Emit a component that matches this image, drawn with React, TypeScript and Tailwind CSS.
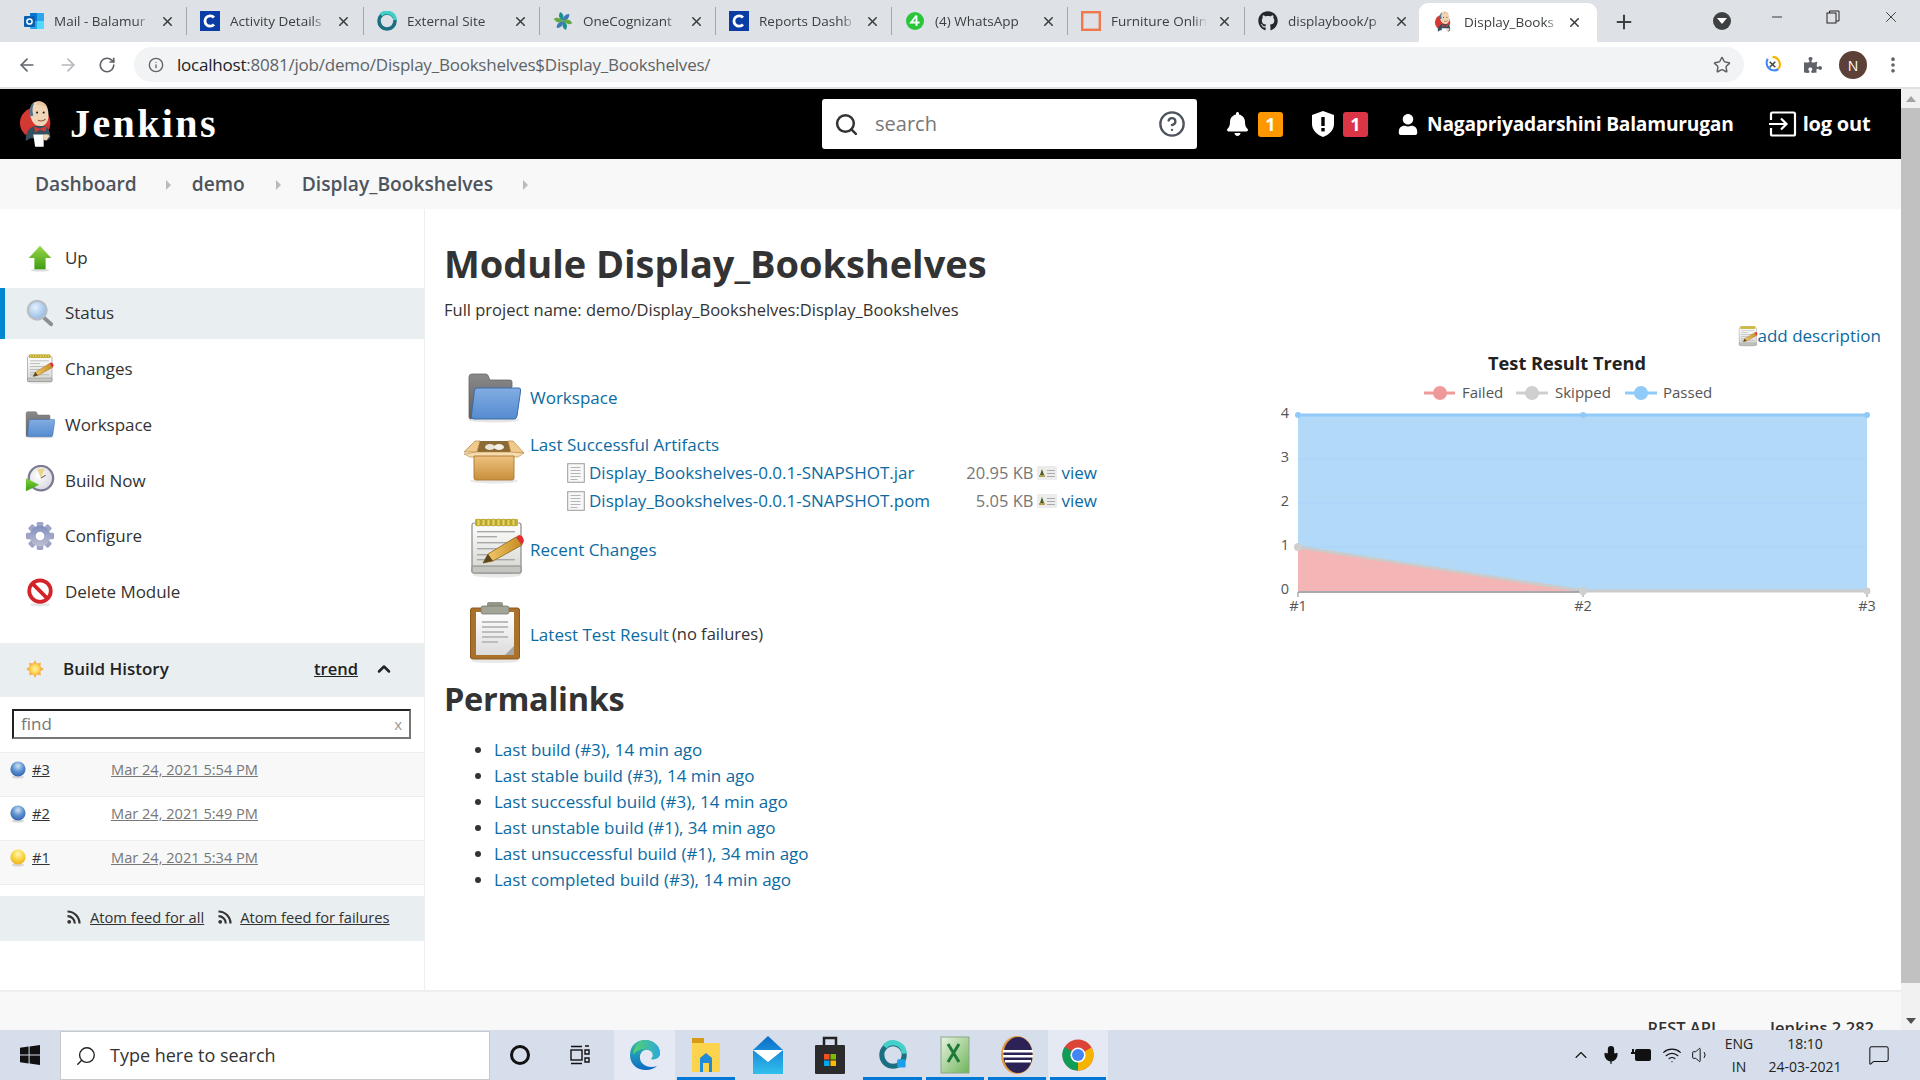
import React from "react";
import { ArrowLeft, ArrowRight, RotateCw, Star, X, Plus, Minus, ChevronUp, Info, Search, CircleHelp, MoreVertical, ChevronUp as Caret, Mic, Volume1, Wifi, MessageSquare } from "lucide-react";
import { FaBell, FaUser, FaGithub, FaPuzzlePiece } from "react-icons/fa";

type IP = { className?: string };

const Grad = ({ id, a, b, x2 = 0, y2 = 1 }: { id: string; a: string; b: string; x2?: number; y2?: number }) => (
  <linearGradient id={id} x1="0" y1="0" x2={x2} y2={y2}>
    <stop offset="0" stopColor={a} />
    <stop offset="1" stopColor={b} />
  </linearGradient>
);

const UpIcon = ({ className }: IP) => (
  <svg viewBox="0 0 32 32" className={className}>
    <defs><Grad id="upg" a="#9ad84a" b="#3f9b12" /></defs>
    <ellipse cx="16" cy="29" rx="10" ry="1.5" fill="#ddd" />
    <path d="M16 3 L28 16 H22 V28 H10 V16 H4 Z" fill="url(#upg)" />
  </svg>
);

const MagnifierIcon = ({ className }: IP) => (
  <svg viewBox="0 0 32 32" className={className}>
    <defs>
      <radialGradient id="magg" cx="0.4" cy="0.35" r="0.7">
        <stop offset="0" stopColor="#e4f0fc" />
        <stop offset="1" stopColor="#8db7e6" />
      </radialGradient>
    </defs>
    <path d="M19 20 L28 28" stroke="#8b8f94" strokeWidth="4" strokeLinecap="round" />
    <circle cx="13" cy="13" r="10" fill="url(#magg)" stroke="#b8bdc4" strokeWidth="2.4" />
  </svg>
);

const NotepadIcon = ({ className, uid = "n" }: IP & { uid?: string }) => (
  <svg viewBox="0 0 56 60" className={className}>
    <defs><Grad id={`${uid}pad`} a="#ffffff" b="#d4d4d0" /><Grad id={`${uid}pen`} a="#f6cf72" b="#c68a24" x2={1} y2={0} /></defs>
    <ellipse cx="28" cy="57" rx="24" ry="2.5" fill="#e8e8e8" />
    <rect x="3" y="5" width="49" height="50" rx="2" fill={`url(#${uid}pad)`} stroke="#8a8a86" strokeWidth="1.2" />
    <rect x="3" y="48" width="49" height="7" rx="1" fill="#c4c4c0" stroke="#8a8a86" strokeWidth="1" />
    <rect x="6" y="1" width="43" height="7" rx="1" fill="#c9b236" />
    {[8, 13, 18, 23, 28, 33, 38, 43].map((x) => (
      <rect key={x} x={x} y="1" width="3" height="7" rx="1.3" fill="#e7d660" stroke="#8f7b1c" strokeWidth=".5" />
    ))}
    {[13, 18, 24, 30, 36, 41].map((y, i) => (
      <rect key={y} x="8" y={y} width={i % 3 === 1 ? 20 : 38} height="1.4" fill="#a8a8a8" />
    ))}
    <path d="M14 45 L19 36 L47 19 L53 27 L24 43 Z" fill={`url(#${uid}pen)`} stroke="#8d6414" strokeWidth=".8" />
    <path d="M14 45 L19 36 L24 43 Z" fill="#5a4620" />
    <path d="M47 19 L50 17 Q54 17 55 23 L53 27 Z" fill="#e22c30" />
  </svg>
);

const FolderIcon = ({ className, uid = "f" }: IP & { uid?: string }) => (
  <svg viewBox="0 0 54 50" className={className}>
    <defs><Grad id={`${uid}fb`} a="#8a8a8a" b="#5d5d5d" /><Grad id={`${uid}ff`} a="#82ade2" b="#558bd0" /></defs>
    <ellipse cx="27" cy="47" rx="25" ry="2.5" fill="#e6e6e6" />
    <path d="M2 4 Q2 1 5 1 H19 Q21 1 22 5 L23 7 H43 Q45 7 45 9 V14 L4 46 Q2 46 2 44 Z" fill={`url(#${uid}fb)`} stroke="#666" strokeWidth=".8" />
    <path d="M10 15 H52 Q54 15 53.6 18 L50 43 Q49.5 46 47 46 H7 Q4 46 4.4 43 L7.5 17 Q8 15 10 15 Z" fill={`url(#${uid}ff)`} stroke="#3b6cab" strokeWidth="1" />
  </svg>
);

const BoxIcon = ({ className }: IP) => (
  <svg viewBox="0 0 60 44" className={className}>
    <defs><Grad id="boxa" a="#efc27f" b="#c78f3a" /></defs>
    <ellipse cx="30" cy="41" rx="24" ry="2.5" fill="#e8e8e8" />
    <path d="M12 4 L16 1 H44 L48 4 L46 16 H14 Z" fill="#8c6a36" />
    <ellipse cx="26" cy="7" rx="5" ry="3" fill="#e9e5db" />
    <ellipse cx="35" cy="7" rx="5" ry="3" fill="#f4f1e8" />
    <path d="M11 1 L16 1 L13 12 H0 Z" fill="#f0c98d" stroke="#b5853e" strokeWidth=".7" />
    <path d="M44 1 L49 1 L60 13 H47 Z" fill="#f0c98d" stroke="#b5853e" strokeWidth=".7" />
    <path d="M0 14 L13 12 H47 L60 13 L54 17 H6 Z" fill="#f6dcae" stroke="#b5853e" strokeWidth=".6" />
    <path d="M10 16 H50 V38 Q50 40 48 40 H12 Q10 40 10 38 Z" fill="url(#boxa)" stroke="#b0803a" strokeWidth="1" />
  </svg>
);

const ClipboardIcon = ({ className }: IP) => (
  <svg viewBox="0 0 52 62" className={className}>
    <defs><Grad id="clip" a="#ffffff" b="#dcdcdc" /></defs>
    <ellipse cx="26" cy="60" rx="24" ry="2" fill="#e8e8e8" />
    <rect x="1.5" y="7" width="49" height="51" rx="2" fill="#a9712a" stroke="#8a5a1e" strokeWidth="1" />
    <rect x="7" y="11" width="38" height="43" fill="url(#clip)" />
    <path d="M36 54 L45 45 V54 Z" fill="#a6a6a6" />
    <rect x="18" y="1" width="16" height="6" rx="2" fill="#95978c" />
    <rect x="12" y="5" width="28" height="8" rx="2" fill="#a2a497" stroke="#75776c" strokeWidth=".8" />
    {[20, 25, 30, 35, 40].map((y, i) => (
      <rect key={y} x="13" y={y} width={[26, 26, 22, 26, 16][i]} height="2" fill="#bdbdbd" />
    ))}
  </svg>
);

const FileIcon = ({ className }: IP) => (
  <svg viewBox="0 0 18 20" className={className}>
    <rect x=".7" y=".7" width="16.6" height="18.6" fill="#f8f8f8" stroke="#9c9c9c" strokeWidth="1" />
    {[4, 7, 10, 13, 16].map((y, i) => (
      <rect key={y} x="3.5" y={y} width={i === 4 ? 7 : 10} height="1" fill="#b5b5b5" />
    ))}
  </svg>
);

const ViewIcon = ({ className }: IP) => (
  <svg viewBox="0 0 20 16" className={className}>
    <rect x="0" y="1" width="20" height="14" rx="1" fill="#ececec" />
    <path d="M3 10 L5 4 L7 10 Z" fill="#4a5d1f" />
    <rect x="2" y="10" width="6" height="2" fill="#b3a15a" />
    <rect x="10" y="5" width="8" height="1" fill="#aaa" />
    <rect x="10" y="8" width="8" height="1" fill="#aaa" />
    <rect x="10" y="11" width="8" height="1" fill="#aaa" />
  </svg>
);

const ClockIcon = ({ className }: IP) => (
  <svg viewBox="0 0 32 32" className={className}>
    <defs>
      <radialGradient id="clk" cx="0.4" cy="0.4" r="0.7"><stop offset="0" stopColor="#ffffff" /><stop offset="1" stopColor="#d4d4dc" /></radialGradient>
      <Grad id="clkp" a="#7ed63a" b="#3f9c14" />
    </defs>
    <circle cx="17" cy="14" r="13" fill="url(#clk)" stroke="#7b7a95" strokeWidth="2.4" />
    <path d="M17 14 L13 4 L21 4 Z" fill="#e8d58c" />
    <path d="M17 14 L22 11" stroke="#666" strokeWidth="1.2" />
    <path d="M1 14 L15 21 L1 28 Z" fill="url(#clkp)" />
  </svg>
);

const GearIcon = ({ className }: IP) => (
  <svg viewBox="0 0 32 32" className={className}>
    <defs><Grad id="gear" a="#7f8dc0" b="#c0bfd0" /></defs>
    {[0, 45, 90, 135, 180, 225, 270, 315].map((r) => (
      <rect key={r} x="12.5" y="1" width="7" height="8" rx="1.5" fill="#9ea4c6" transform={`rotate(${r} 16 16)`} />
    ))}
    <circle cx="16" cy="16" r="11" fill="url(#gear)" />
    <circle cx="16" cy="16" r="4.6" fill="#fff" />
  </svg>
);

const DeleteIcon = ({ className }: IP) => (
  <svg viewBox="0 0 32 32" className={className}>
    <ellipse cx="16" cy="29.5" rx="11" ry="1.6" fill="#e4e4e4" />
    <circle cx="16" cy="15" r="11.5" fill="#fff" stroke="#d3242a" strokeWidth="4" />
    <path d="M8 7 L24 23" stroke="#d3242a" strokeWidth="4" />
  </svg>
);

const SunIcon = ({ className }: IP) => (
  <svg viewBox="0 0 20 20" className={className}>
    <defs>
      <radialGradient id="sun"><stop offset="0" stopColor="#fff6a8" /><stop offset="1" stopColor="#fbc93c" /></radialGradient>
    </defs>
    <path d="M10 0 L12 4 L16.5 3 L16 7.5 L20 10 L16 12.5 L16.5 17 L12 16 L10 20 L8 16 L3.5 17 L4 12.5 L0 10 L4 7.5 L3.5 3 L8 4 Z" fill="#f9b04a" />
    <circle cx="10" cy="10" r="6" fill="url(#sun)" />
  </svg>
);

const Ball = ({ color }: { color: "blue" | "yellow" }) => {
  const id = `ball-${color}`;
  const stops = color === "blue" ? ["#cfe3f6", "#5d90cf", "#2a5ea8"] : ["#fff7b8", "#f8d540", "#eea820"];
  return (
    <svg viewBox="0 0 16 18" className="w-[16px] h-[18px] mt-[2px] shrink-0">
      <defs>
        <radialGradient id={id} cx="0.5" cy="0.3" r="0.75">
          <stop offset="0" stopColor={stops[0]} />
          <stop offset="0.5" stopColor={stops[1]} />
          <stop offset="1" stopColor={stops[2]} />
        </radialGradient>
      </defs>
      <ellipse cx="8" cy="16" rx="6" ry="1.6" fill="#d8d8d8" />
      <circle cx="8" cy="8" r="7.6" fill={`url(#${id})`} />
    </svg>
  );
};

const JenkinsLogo = ({ className }: IP) => (
  <svg viewBox="0 0 40 50" className={className}>
    <circle cx="17" cy="24" r="16" fill="#d33833" />
    <path d="M7 43 Q7 29 17 27 H27 Q33 29 33 40 L29 43 L26 40 H12 Z" fill="#335061" />
    <path d="M12 17 Q10 2 20 1 Q30 1 31 14 Q32 24 25 27 Q17 28 14 22 Z" fill="#f0d6b7" />
    <path d="M12 17 Q10 5 16 3 Q13 9 15 16 Z" fill="#49728b" />
    <path d="M20 1 Q28 1 30 9 Q24 4 18 5 Z" fill="#e8c6a0" />
    <circle cx="19" cy="13" r="1.1" fill="#222" />
    <circle cx="26" cy="13" r="1.1" fill="#222" />
    <path d="M20 21 Q24 23 28 20" stroke="#8b5a3a" strokeWidth="1.2" fill="none" />
    <path d="M16 28 L22 30 L29 27 L28 33 L22 31 L17 34 Z" fill="#d33833" />
    <path d="M15 36 H26 V49 H17 Z" fill="#fff" />
    <path d="M26 36 Q32 35 32 38 L29 42 H26 Z" fill="#f0d6b7" />
  </svg>
);

const WinLogo = ({ className }: IP) => (
  <svg viewBox="0 0 20 20" className={className} fill="#111">
    <path d="M0 2.8 L8.6 1.6 V9.4 H0 Z M9.6 1.4 L20 0 V9.4 H9.6 Z M0 10.6 H8.6 V18.4 L0 17.2 Z M9.6 10.6 H20 V20 L9.6 18.6 Z" />
  </svg>
);

const OutlookIcon = ({ className }: IP) => (
  <svg viewBox="0 0 20 20" className={className}>
    <rect x="6" y="2" width="14" height="16" rx="1" fill="#28a8ea" />
    <rect x="6" y="2" width="7" height="8" fill="#0078d4" />
    <rect x="13" y="10" width="7" height="8" fill="#50d9ff" />
    <rect x="0" y="5" width="11" height="11" rx="1" fill="#0a5eb0" />
    <circle cx="5.5" cy="10.5" r="2.6" fill="none" stroke="#fff" strokeWidth="1.5" />
  </svg>
);

const CIcon = ({ className }: IP) => (
  <svg viewBox="0 0 20 20" className={className}>
    <rect width="20" height="20" fill="#0a3ca5" />
    <path d="M14 6.5 A5.2 5.2 0 1 0 14 13.5" fill="none" stroke="#fff" strokeWidth="2.8" />
  </svg>
);

const WebexIcon = ({ className, badge }: IP & { badge?: boolean }) => (
  <svg viewBox="0 0 20 20" className={className}>
    <circle cx="10" cy="10" r="8" fill="none" stroke="#1b6f80" strokeWidth="3.6" />
    <path d="M4 4 A8 8 0 0 1 18 9" fill="none" stroke="#42d0c8" strokeWidth="3.6" />
    {badge && <rect x="13" y="13" width="6" height="6" rx="1" fill="#1aa0e8" />}
  </svg>
);

const CognizantIcon = ({ className }: IP) => (
  <svg viewBox="0 0 20 20" className={className}>
    {[0, 60, 120, 180, 240, 300].map((r, i) => (
      <path key={r} d="M10 10 Q4 7 7 1 Q12 3 10 10" transform={`rotate(${r} 10 10)`} fill={["#1a8f8f", "#3c78b8", "#64a844", "#1a8f8f", "#3c78b8", "#64a844"][i]} />
    ))}
  </svg>
);

const WhatsIcon = ({ className }: IP) => (
  <svg viewBox="0 0 20 20" className={className}>
    <circle cx="10" cy="10" r="9" fill="#29c63c" />
    <path d="M11.5 4.5 V15 M11.5 4.5 L6 11.5 H14.5" stroke="#fff" strokeWidth="1.8" fill="none" />
  </svg>
);

const OrangeSquare = ({ className }: IP) => (
  <svg viewBox="0 0 20 20" className={className}>
    <rect x="1.2" y="1.2" width="17.6" height="17.6" fill="none" stroke="#f2784b" strokeWidth="2.4" />
  </svg>
);

const EdgeIcon = ({ className }: IP) => (
  <svg viewBox="0 0 32 32" className={className}>
    <defs><Grad id="edgea" a="#35c1a8" b="#0c6ac6" /><Grad id="edgeb" a="#57d16a" b="#2aa9dc" x2={1} y2={0} /></defs>
    <path d="M16 1 C6 1 1 8 1 16 C1 25 8 31 17 31 C22 31 26 29 28 27 C20 30 10 26 11 17 C12 10 20 9 23 13 C25 16 24 19 22 20 C26 21 31 19 31 14 C31 7 24 1 16 1 Z" fill="url(#edgea)" />
    <path d="M16 1 C25 1 31 7 31 14 C31 19 26 21 22 20 C25 17 24 12 19 11 C12 9 7 12 4 16 C5 7 10 1 16 1 Z" fill="url(#edgeb)" />
  </svg>
);

const ExplorerIcon = ({ className }: IP) => (
  <svg viewBox="0 0 28 34" className={className}>
    <path d="M0 0 H12 V6 H0 Z" fill="#d89a16" />
    <rect x="0" y="5" width="28" height="29" fill="#fbd34c" />
    <path d="M8 20 L14 15 L20 20 V34 H8 Z" fill="#1f8ad6" />
    <rect x="11" y="25" width="6" height="9" fill="#fbd34c" />
  </svg>
);

const MailIcon = ({ className }: IP) => (
  <svg viewBox="0 0 30 38" className={className}>
    <defs><Grad id="mailg" a="#0a6cc8" b="#32bfee" /></defs>
    <path d="M0 14 L15 0 L30 14 V38 H0 Z" fill="url(#mailg)" />
    <path d="M0 14 H30 L15 26 Z" fill="#fff" />
  </svg>
);

const StoreIcon = ({ className }: IP) => (
  <svg viewBox="0 0 30 38" className={className}>
    <path d="M9 9 V2 H21 V9" fill="none" stroke="#222" strokeWidth="2.5" />
    <rect x="0" y="9" width="30" height="29" rx="1" fill="#2b2b2b" />
    <rect x="9" y="18" width="5.5" height="5.5" fill="#f25022" />
    <rect x="15.5" y="18" width="5.5" height="5.5" fill="#7fba00" />
    <rect x="9" y="24.5" width="5.5" height="5.5" fill="#00a4ef" />
    <rect x="15.5" y="24.5" width="5.5" height="5.5" fill="#ffb900" />
  </svg>
);

const ExcelIcon = ({ className }: IP) => (
  <svg viewBox="0 0 30 38" className={className}>
    <defs><Grad id="xl" a="#e7f3df" b="#6fb45a" x2={1} y2={1} /></defs>
    <rect x="1" y="1" width="28" height="36" fill="url(#xl)" stroke="#8aa785" />
    <path d="M8 8 L19 26 M19 8 L8 26" stroke="#1d7a3a" strokeWidth="3" />
  </svg>
);

const EclipseIcon = ({ className }: IP) => (
  <svg viewBox="0 0 32 38" className={className}>
    <ellipse cx="16" cy="19" rx="16" ry="19" fill="#e39a43" />
    <ellipse cx="17" cy="19" rx="14.5" ry="18" fill="#2c2255" />
    <rect x="2" y="14" width="30" height="2.5" fill="#fff" />
    <rect x="2" y="19" width="30" height="2.5" fill="#fff" />
    <rect x="4" y="24" width="26" height="2.5" fill="#fff" />
  </svg>
);

const ChromeIcon = ({ className }: IP) => (
  <svg viewBox="0 0 32 32" className={className}>
    <circle cx="16" cy="16" r="15.5" fill="#db4437" />
    <path d="M16 16 L2.6 8 A15.5 15.5 0 0 0 16 31.5 Z" fill="#0f9d58" />
    <path d="M16 16 L29.6 8.5 A15.5 15.5 0 0 1 16 31.5 Z" fill="#f4b400" />
    <circle cx="16" cy="16" r="7.6" fill="#fff" />
    <circle cx="16" cy="16" r="6" fill="#4285f4" />
  </svg>
);

const ShieldIcon = ({ className }: IP) => (
  <svg viewBox="0 0 22 26" className={className}>
    <path d="M11 0 L22 4 V13 C22 19 17 24 11 26 C5 24 0 19 0 13 V4 Z" fill="#fff" />
    <rect x="9.3" y="6" width="3.4" height="9" fill="#000" />
    <rect x="9.3" y="17" width="3.4" height="3.4" fill="#000" />
  </svg>
);

const BatteryIcon = ({ className }: IP) => (
  <svg viewBox="0 0 20 14" className={className}>
    <rect x="4.5" y="1.5" width="15" height="11" rx="1" fill="#111" stroke="#111" />
    <path d="M0 5 H4 M2 1 V5" stroke="#111" strokeWidth="2" />
  </svg>
);

const LogoutIcon = ({ className }: IP) => (
  <svg viewBox="0 0 28 26" className={className} fill="none" stroke="#fff" strokeWidth="2.2">
    <path d="M2 9 V3 Q2 1.5 3.5 1.5 H24.5 Q26 1.5 26 3 V23 Q26 24.5 24.5 24.5 H3.5 Q2 24.5 2 23 V17" />
    <path d="M0 13 H17 M12 7.5 L17.5 13 L12 18.5" />
  </svg>
);

const FeedIcon = ({ className }: IP) => (
  <svg viewBox="0 0 14 14" className={className} fill="none" stroke="#333" strokeWidth="2.2">
    <circle cx="2.2" cy="11.8" r="1.9" fill="#333" stroke="none" />
    <path d="M0.5 6.2 A7.3 7.3 0 0 1 7.8 13.5" />
    <path d="M0.5 1.5 A12 12 0 0 1 12.5 13.5" />
  </svg>
);

const tabs = [
  { t: "Mail - Balamur", I: OutlookIcon, w: 176 },
  { t: "Activity Details", I: CIcon, w: 177 },
  { t: "External Site", I: WebexIcon, w: 176 },
  { t: "OneCognizant", I: CognizantIcon, w: 176 },
  { t: "Reports Dashb", I: CIcon, w: 176 },
  { t: "(4) WhatsApp", I: WhatsIcon, w: 176 },
  { t: "Furniture Onlin", I: OrangeSquare, w: 177 },
  { t: "displaybook/p", I: null, w: 174 },
];

const TabStrip = () => (
  <div className="h-[42px] bg-[#dee1e6] flex items-start shrink-0 relative">
    <div className="flex items-center h-[36px] mt-[3px] pl-[11px]">
      {tabs.map((tab, i) => (
        <div key={i} style={{ width: tab.w }} className="flex items-center h-[28px] pl-[13px] border-r border-[#a4a7ab] shrink-0 last:border-r-0">
          {tab.I ? <tab.I className="w-[20px] h-[20px] shrink-0" /> : <FaGithub className="w-[20px] h-[20px] shrink-0 text-[#24292e]" />}
          <span className="ml-[10px] w-[96px] overflow-hidden whitespace-nowrap text-[13.5px] text-[#3c4043] [mask-image:linear-gradient(to_right,black_86%,transparent)]">{tab.t}</span>
          <X className="ml-[10px] w-[15px] h-[15px] text-[#3c4043] shrink-0" strokeWidth={2.5} />
        </div>
      ))}
    </div>
    <div className="w-[178px] h-[39px] mt-[3px] bg-white rounded-t-[9px] flex items-center pl-[15px] shrink-0">
      <JenkinsLogo className="w-[20px] h-[24px] shrink-0" />
      <span className="ml-[10px] w-[95px] overflow-hidden whitespace-nowrap text-[13.5px] text-[#3c4043] [mask-image:linear-gradient(to_right,black_86%,transparent)]">Display_Books</span>
      <X className="ml-[8px] w-[15px] h-[15px] text-[#3c4043] shrink-0" strokeWidth={2.5} />
    </div>
    <Plus className="ml-[16px] mt-[11px] w-[22px] h-[22px] text-[#3c4043] shrink-0" strokeWidth={2.2} />
    <div className="ml-[78px] mt-[12px] w-[18px] h-[18px] rounded-full bg-[#3c4043] flex items-center justify-center shrink-0">
      <div className="w-0 h-0 border-l-[5px] border-r-[5px] border-t-[6px] border-l-transparent border-r-transparent border-t-white" />
    </div>
    <Minus className="ml-[38px] mt-[9px] w-[16px] h-[16px] text-[#222] shrink-0" strokeWidth={1.3} />
    <svg viewBox="0 0 14 14" className="ml-[41px] mt-[10px] w-[14px] h-[14px] shrink-0" fill="none" stroke="#222">
      <rect x="1" y="3" width="9" height="10" /><path d="M3.5 3 V1 H13 V11 H10" />
    </svg>
    <X className="ml-[42px] mt-[8px] w-[18px] h-[18px] text-[#222] shrink-0" strokeWidth={1.1} />
  </div>
);

const Toolbar = () => (
  <div className="h-[47px] bg-white border-b-2 border-[#dee1e6] flex items-start shrink-0">
    <ArrowLeft className="ml-[17px] mt-[13px] w-[20px] h-[20px] text-[#5f6368] shrink-0" strokeWidth={2} />
    <ArrowRight className="ml-[21px] mt-[13px] w-[20px] h-[20px] text-[#b5b8bc] shrink-0" strokeWidth={2} />
    <RotateCw className="ml-[20px] mt-[14px] w-[18px] h-[18px] text-[#5f6368] shrink-0" strokeWidth={2.2} />
    <div className="ml-[18px] mt-[5px] w-[1610px] h-[35px] rounded-full bg-[#f1f3f4] flex items-center shrink-0">
      <Info className="ml-[14px] w-[16px] h-[16px] text-[#5f6368] shrink-0" strokeWidth={2} />
      <span className="ml-[13px] text-[17px] text-[#5f6368] whitespace-nowrap tracking-[-0.22px]"><span className="text-[#202124]">localhost</span>:8081/job/demo/Display_Bookshelves$Display_Bookshelves/</span>
      <Star className="ml-auto mr-[13px] w-[18px] h-[18px] text-[#5f6368] shrink-0" strokeWidth={2} />
    </div>
    <svg viewBox="0 0 20 20" className="ml-[19px] mt-[13px] w-[19px] h-[19px] shrink-0">
      <path d="M10 2 A8 8 0 0 1 16 15" fill="none" stroke="#f4b400" strokeWidth="2.2" />
      <path d="M16 15 A8 8 0 0 1 5 4" fill="none" stroke="#4285f4" strokeWidth="2.2" />
      <path d="M7 7 L13 13 M13 7 L7 13" stroke="#3c4043" strokeWidth="1.5" />
    </svg>
    <FaPuzzlePiece className="ml-[22px] mt-[14px] w-[18px] h-[18px] text-[#5f6368] shrink-0" />
    <div className="ml-[17px] mt-[9px] w-[28px] h-[28px] rounded-full bg-[#5d4037] text-white text-[14px] flex items-center justify-center shrink-0">N</div>
    <MoreVertical className="ml-[16px] mt-[13px] w-[20px] h-[20px] text-[#5f6368] shrink-0" strokeWidth={2.4} />
  </div>
);

const Header = () => (
  <div className="h-[70px] bg-black flex items-center text-white shrink-0">
    <JenkinsLogo className="ml-[19px] w-[38px] h-[48px] shrink-0" />
    <span className="ml-[13px] w-[146px] text-[40px] font-bold font-['Liberation_Serif',serif] tracking-[2.4px] leading-none whitespace-nowrap shrink-0">Jenkins</span>
    <div className="ml-[606px] w-[375px] h-[50px] bg-white rounded-[3px] flex items-center shrink-0">
      <Search className="ml-[12px] w-[25px] h-[25px] text-[#333] shrink-0" strokeWidth={2.4} />
      <span className="ml-[16px] text-[20px] text-[#777]">search</span>
      <CircleHelp className="ml-auto mr-[11px] w-[28px] h-[28px] text-[#4d545d] shrink-0" strokeWidth={2} />
    </div>
    <FaBell className="ml-[30px] w-[21px] h-[26px] shrink-0" />
    <span className="ml-[10px] w-[25px] h-[25px] bg-[#ff9800] rounded-[3px] flex items-center justify-center text-[18px] font-bold shrink-0">1</span>
    <ShieldIcon className="ml-[29px] w-[22px] h-[26px] shrink-0" />
    <span className="ml-[9px] w-[25px] h-[25px] bg-[#dc3545] rounded-[3px] flex items-center justify-center text-[18px] font-bold shrink-0">1</span>
    <FaUser className="ml-[30px] w-[20px] h-[21px] shrink-0" />
    <span className="ml-[9px] text-[19.2px] font-bold tracking-[-0.2px] whitespace-nowrap">Nagapriyadarshini Balamurugan</span>
    <LogoutIcon className="ml-[35px] w-[28px] h-[26px] shrink-0" />
    <span className="ml-[6px] text-[20px] font-bold tracking-[-0.2px] whitespace-nowrap">log out</span>
  </div>
);

const Crumb = () => <div className="w-0 h-0 border-y-[5px] border-l-[5px] border-y-transparent border-l-[#bbb] shrink-0" />;

const Breadcrumb = () => (
  <div className="h-[50px] bg-[#f8f8f8] flex items-center text-[19.2px] font-semibold text-[#4d545d] shrink-0 pt-[1px]">
    <span className="ml-[35px]">Dashboard</span>
    <div className="ml-[29px]"><Crumb /></div>
    <span className="ml-[21px]">demo</span>
    <div className="ml-[31px]"><Crumb /></div>
    <span className="ml-[21px]">Display_Bookshelves</span>
    <div className="ml-[30px]"><Crumb /></div>
  </div>
);

const side = [
  { t: "Up", I: UpIcon },
  { t: "Status", I: MagnifierIcon, active: true },
  { t: "Changes", I: NotepadIcon },
  { t: "Workspace", I: FolderIcon },
  { t: "Build Now", I: ClockIcon },
  { t: "Configure", I: GearIcon },
  { t: "Delete Module", I: DeleteIcon },
];

const builds = [
  { n: "#3", d: "Mar 24, 2021 5:54 PM", c: "blue" as const, bg: "bg-[#f8f8f8]" },
  { n: "#2", d: "Mar 24, 2021 5:49 PM", c: "blue" as const, bg: "bg-white" },
  { n: "#1", d: "Mar 24, 2021 5:34 PM", c: "yellow" as const, bg: "bg-[#f8f8f8]" },
];

const Sidebar = () => (
  <div className="w-[425px] border-r border-[#eee] flex flex-col shrink-0 text-[#333]">
    <div className="pt-[23px] flex flex-col gap-[4.7px]">
      {side.map((s, i) => (
        <div key={s.t} className={`h-[51px] flex items-center ${s.active ? "bg-[#e9eef1] border-l-[5px] border-[#0087d2] pl-[20px]" : "pl-[25px]"}`}>
          <s.I className="w-[30px] h-[30px] shrink-0" {...(s.I === NotepadIcon ? { uid: "side" + i } : s.I === FolderIcon ? { uid: "side" + i } : {})} />
          <span className="ml-[10px] text-[17px] tracking-[-0.05px]">{s.t}</span>
        </div>
      ))}
    </div>
    <div className="mt-[26px] border-t-2 border-[#eee]">
      <div className="h-[52px] bg-[#e9eef1] flex items-center pb-[4px]">
        <SunIcon className="ml-[26px] w-[18px] h-[18px] shrink-0" />
        <span className="ml-[19px] text-[17px] font-semibold text-[#222]">Build History</span>
        <span className="ml-auto text-[16.5px] font-semibold underline text-[#222]">trend</span>
        <ChevronUp className="ml-[16px] mr-[30px] w-[20px] h-[20px] text-[#222]" strokeWidth={3} />
      </div>
      <div className="pl-[12px] pt-[12px] pb-[13px]">
        <div className="w-[399px] h-[30px] border-2 border-t-[#222] border-l-[#222] border-b-[#767676] border-r-[#767676] flex items-center px-[7px]">
          <span className="text-[17px] text-[#777]">find</span>
          <span className="ml-auto text-[15px] text-[#999]">x</span>
        </div>
      </div>
      <div className="border-t border-[#eee]">
        {builds.map((b) => (
          <div key={b.n} className={`h-[44px] ${b.bg} border-b border-[#eee] flex items-start pt-[6px] pl-[10px]`}>
            <Ball color={b.c} />
            <span className="ml-[6px] w-[79px] text-[14.6px] underline text-[#333]">{b.n}</span>
            <span className="text-[14.6px] underline text-[#777]">{b.d}</span>
          </div>
        ))}
      </div>
      <div className="mt-[11px] h-[45px] bg-[#e9eef1] flex items-center text-[14.7px] text-[#333] pb-[3px]">
        <FeedIcon className="ml-[67px] w-[14px] h-[14px] shrink-0" />
        <span className="ml-[9px] underline">Atom feed for all</span>
        <FeedIcon className="ml-[14px] w-[14px] h-[14px] shrink-0" />
        <span className="ml-[8px] underline">Atom feed for failures</span>
      </div>
    </div>
  </div>
);

const Chart = () => {
  const font = { fontFamily: "'Open Sans', sans-serif" };
  return (
    <svg viewBox="1261 350 640 270" className="w-[640px] h-[270px] block">
      <text x="1567" y="370" textAnchor="middle" fontSize="18.2" fontWeight="700" fill="#222" style={font}>Test Result Trend</text>
      <g fontSize="15" fill="#555" style={font}>
        <path d="M1424 393 H1455" stroke="#ef9a9a" strokeWidth="3" /><circle cx="1440" cy="393" r="7" fill="#ef9a9a" />
        <text x="1462" y="398">Failed</text>
        <path d="M1516 393 H1548" stroke="#cfcfcf" strokeWidth="3" /><circle cx="1532" cy="393" r="7" fill="#cfcfcf" />
        <text x="1555" y="398">Skipped</text>
        <path d="M1625 393 H1657" stroke="#90caf9" strokeWidth="3" /><circle cx="1641" cy="393" r="7" fill="#90caf9" />
        <text x="1663" y="398">Passed</text>
      </g>
      <rect x="1298" y="415" width="569" height="176" fill="#b3d9f9" />
      <g stroke="#a7d3f7" strokeWidth="1">
        <path d="M1298 459 H1867 M1298 503 H1867 M1298 547 H1867" />
      </g>
      <path d="M1298 591 V547 L1583 591 Z" fill="#f4b5b6" />
      <path d="M1298 415 H1867" stroke="#90caf9" strokeWidth="3" />
      <path d="M1298 547 L1583 591 H1867" stroke="#cbcbcb" strokeWidth="3" fill="none" />
      <path d="M1298 592 H1583" stroke="#8d8d96" strokeWidth="1.5" />
      <path d="M1298 592 V597 M1583 592 V597 M1867 592 V597" stroke="#888" strokeWidth="1" />
      {[1298, 1583, 1867].map((x) => <circle key={x} cx={x} cy="415" r="3" fill="#90caf9" />)}
      <circle cx="1298" cy="547" r="4" fill="#cfcfcf" />
      <circle cx="1583" cy="591" r="4" fill="#cfcfcf" />
      <circle cx="1867" cy="591" r="3.5" fill="#cfcfcf" />
      <g fontSize="14.5" fill="#555" style={font}>
        {["4", "3", "2", "1", "0"].map((t, i) => (
          <text key={t} x="1289" y={418 + i * 44} textAnchor="end">{t}</text>
        ))}
        <text x="1298" y="611" textAnchor="middle">#1</text>
        <text x="1583" y="611" textAnchor="middle">#2</text>
        <text x="1867" y="611" textAnchor="middle">#3</text>
      </g>
    </svg>
  );
};

const Link = ({ children, className = "" }: { children: React.ReactNode; className?: string }) => (
  <span className={`text-[#0b6aa2] whitespace-nowrap ${className}`}>{children}</span>
);

const perma = [
  "Last build (#3), 14 min ago",
  "Last stable build (#3), 14 min ago",
  "Last successful build (#3), 14 min ago",
  "Last unstable build (#1), 34 min ago",
  "Last unsuccessful build (#1), 34 min ago",
  "Last completed build (#3), 14 min ago",
];

const Main = () => (
  <div className="flex-1 min-w-0 pl-[19px] text-[#333]">
    <h1 className="pt-[32px] text-[38px] leading-[44px] font-bold tracking-[-0.05px] text-[#333] whitespace-nowrap">Module Display_Bookshelves</h1>
    <p className="mt-[13px] text-[16.5px] leading-[24px]">Full project name: demo/Display_Bookshelves:Display_Bookshelves</p>
    <div className="flex">
      <div className="flex-1 min-w-0">
        <div className="mt-[51px] h-[50px] flex items-center">
          <div className="w-[86px] flex justify-end pr-[9px]"><FolderIcon uid="main" className="w-[54px] h-[50px]" /></div>
          <Link className="text-[17px]">Workspace</Link>
        </div>
        <div className="mt-[8px] flex h-[84px]">
          <div className="w-[86px] pt-[9px] flex justify-end pr-[6px]"><BoxIcon className="w-[60px] h-[44px]" /></div>
          <div className="w-[570px] text-[17px]">
            <div className="h-[28px] flex items-center"><Link>Last Successful Artifacts</Link></div>
            <div className="h-[28px] flex items-center pl-[37px]">
              <FileIcon className="w-[18px] h-[20px] shrink-0" />
              <Link className="ml-[4px]">Display_Bookshelves-0.0.1-SNAPSHOT.jar</Link>
              <span className="ml-auto text-[16.5px] text-[#777]">20.95 KB</span>
              <ViewIcon className="ml-[4px] w-[20px] h-[16px] shrink-0" />
              <Link className="ml-[4px] mr-[3px]">view</Link>
            </div>
            <div className="h-[28px] flex items-center pl-[37px]">
              <FileIcon className="w-[18px] h-[20px] shrink-0" />
              <Link className="ml-[4px]">Display_Bookshelves-0.0.1-SNAPSHOT.pom</Link>
              <span className="ml-auto text-[16.5px] text-[#777]">5.05 KB</span>
              <ViewIcon className="ml-[4px] w-[20px] h-[16px] shrink-0" />
              <Link className="ml-[4px] mr-[3px]">view</Link>
            </div>
          </div>
        </div>
        <div className="mt-[3px] h-[60px] flex items-center">
          <div className="w-[86px] flex justify-end pr-[5px]"><NotepadIcon uid="main" className="w-[56px] h-[60px]" /></div>
          <Link className="text-[17px] mt-[3px]">Recent Changes</Link>
        </div>
        <div className="mt-[23px] h-[62px] flex items-center">
          <div className="w-[86px] flex justify-end pr-[9px]"><ClipboardIcon className="w-[52px] h-[62px]" /></div>
          <Link className="text-[17px] mt-[5px]">Latest Test Result</Link>
          <span className="ml-[3px] mt-[5px] text-[16.5px]">(no failures)</span>
        </div>
        <h2 className="mt-[15px] text-[32.5px] leading-[42px] font-bold tracking-[-0.3px] text-[#333]">Permalinks</h2>
        <ul className="mt-[17px] pl-[50px] list-disc text-[17px] leading-[26px] marker:text-[#333]">
          {perma.map((p) => <li key={p}><Link>{p}</Link></li>)}
        </ul>
      </div>
      <div className="w-[640px] shrink-0">
        <div className="mt-[2px] h-[24px] flex items-center justify-end pr-[20px]">
          <NotepadIcon uid="desc" className="w-[20px] h-[21px] shrink-0" />
          <Link className="text-[17px]">add description</Link>
        </div>
        <div className="mt-[2px]"><Chart /></div>
      </div>
    </div>
  </div>
);

const Footer = () => (
  <div className="h-[200px] bg-[#f8f8f8] border-t-2 border-[#eee] shrink-0 flex justify-end gap-[54px] pt-[24px] pr-[27px] text-[16.5px] font-semibold text-[#333]">
    <span>REST API</span>
    <span>Jenkins 2.282</span>
  </div>
);

const Scrollbar = () => (
  <div className="w-[19px] bg-[#f1f1f1] flex flex-col shrink-0">
    <div className="h-[19px] flex items-center justify-center">
      <div className="w-0 h-0 border-x-[5px] border-b-[6px] border-x-transparent border-b-[#a3a3a3]" />
    </div>
    <div className="h-[875px] bg-[#c1c1c1]" />
    <div className="flex-1 flex items-end justify-center pb-[6px]">
      <div className="w-0 h-0 border-x-[5px] border-t-[6px] border-x-transparent border-t-[#505050]" />
    </div>
  </div>
);

const TaskCell = ({ children, w, active, bar }: { children: React.ReactNode; w: number; active?: boolean; bar?: boolean }) => (
  <div style={{ width: w }} className={`h-full flex items-center justify-center relative shrink-0 ${active ? "bg-[#e4e9f3]" : ""}`}>
    {children}
    {bar && <div className="absolute bottom-0 left-[2px] right-[2px] h-[3px] bg-[#0078d7]" />}
  </div>
);

const Taskbar = () => (
  <div className="h-[50px] bg-[#d6deeb] flex items-center shrink-0 text-[#111]">
    <WinLogo className="ml-[20px] w-[20px] h-[20px] shrink-0" />
    <div className="ml-[20px] w-[430px] h-[49px] mt-[1px] bg-white flex items-center border border-[#c9c9c9] shrink-0">
      <Search className="ml-[14px] w-[22px] h-[22px] text-[#222] -scale-x-100 shrink-0" strokeWidth={1.5} />
      <span className="ml-[13px] text-[18px] text-[#333] whitespace-nowrap">Type here to search</span>
    </div>
    <div className="ml-[20px] w-[20px] h-[20px] rounded-full border-[3px] border-[#111] shrink-0" />
    <svg viewBox="0 0 20 20" className="ml-[40px] w-[20px] h-[20px] shrink-0" fill="none" stroke="#111" strokeWidth="1.4">
      <rect x="1" y="5" width="11" height="10" /><path d="M1 1.5 H12 M1 18.5 H12 M15 1 H19 M15 5 H19 V9 H15 Z M15 13 H19 V17 H15 Z" />
    </svg>
    <div className="ml-[24px] h-full flex">
      <TaskCell w={61} active><EdgeIcon className="w-[32px] h-[32px]" /></TaskCell>
      <TaskCell w={62} bar><ExplorerIcon className="w-[28px] h-[34px]" /></TaskCell>
      <TaskCell w={61}><MailIcon className="w-[30px] h-[38px]" /></TaskCell>
      <TaskCell w={63}><StoreIcon className="w-[30px] h-[38px]" /></TaskCell>
      <TaskCell w={63} bar><WebexIcon badge className="w-[28px] h-[36px]" /></TaskCell>
      <TaskCell w={62} bar><ExcelIcon className="w-[30px] h-[38px]" /></TaskCell>
      <TaskCell w={62} bar><EclipseIcon className="w-[32px] h-[38px]" /></TaskCell>
      <TaskCell w={60} active bar><ChromeIcon className="w-[32px] h-[32px]" /></TaskCell>
    </div>
    <Caret className="ml-[463px] w-[20px] h-[20px] shrink-0" strokeWidth={1.3} />
    <Mic className="ml-[10px] w-[20px] h-[24px] shrink-0 fill-[#111]" strokeWidth={1.6} />
    <BatteryIcon className="ml-[10px] w-[20px] h-[14px] shrink-0" />
    <Wifi className="ml-[11px] w-[20px] h-[20px] shrink-0" strokeWidth={1.4} />
    <Volume1 className="ml-[9px] w-[20px] h-[20px] shrink-0" strokeWidth={1.2} />
    <div className="ml-[11px] w-[34px] flex flex-col items-center text-[14px] leading-[23px] text-[#222] shrink-0">
      <span>ENG</span><span>IN</span>
    </div>
    <div className="ml-[9px] w-[80px] flex flex-col items-center text-[14px] leading-[23px] text-[#222] shrink-0">
      <span>18:10</span><span className="whitespace-nowrap">24-03-2021</span>
    </div>
    <MessageSquare className="ml-[23px] w-[22px] h-[22px] shrink-0" strokeWidth={1.1} />
  </div>
);

export default function App() {
  return (
    <div className="w-[1920px] h-[1080px] overflow-hidden flex flex-col bg-white font-['Open_Sans',sans-serif]">
      <TabStrip />
      <Toolbar />
      <div className="flex-1 min-h-0 flex overflow-hidden">
        <div className="flex-1 min-w-0 flex flex-col">
          <Header />
          <Breadcrumb />
          <div className="h-[781px] flex shrink-0">
            <Sidebar />
            <Main />
          </div>
          <Footer />
        </div>
        <Scrollbar />
      </div>
      <Taskbar />
    </div>
  );
}
